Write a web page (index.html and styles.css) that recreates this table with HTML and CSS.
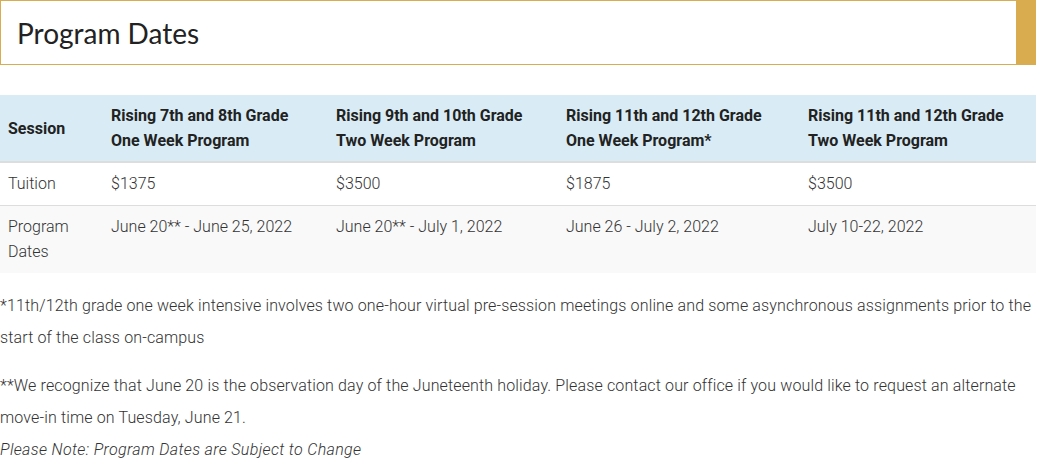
FILE: index.html
```html
<!DOCTYPE html>
<html lang="en">

<head>
    <meta charset="UTF-8">
    <meta name="viewport" content="width=device-width, initial-scale=1.0">
    <title>Program Dates</title>
    <link rel="stylesheet" href="styles.css">
</head>

<body>
    <div class="content">
        <!-- Section title -->
        <div class="section-title">
            <h2>Program Dates</h2>
        </div>

        <!-- Dates table -->
        <table class="dates-table">
            <thead>
                <tr>
                    <th class="col-session">Session</th>
                    <th class="col-a">Rising 7th and 8th Grade<br>One Week Program</th>
                    <th class="col-b">Rising 9th and 10th Grade<br>Two Week Program</th>
                    <th class="col-c">Rising 11th and 12th Grade<br>One Week Program*</th>
                    <th class="col-d">Rising 11th and 12th Grade<br>Two Week Program</th>
                </tr>
            </thead>
            <tbody>
                <tr>
                    <td>Tuition</td>
                    <td>$1375</td>
                    <td>$3500</td>
                    <td>$1875</td>
                    <td>$3500</td>
                </tr>
                <tr class="alt">
                    <td>Program Dates</td>
                    <td>June 20** - June 25, 2022</td>
                    <td>June 20** - July 1, 2022</td>
                    <td>June 26 - July 2, 2022</td>
                    <td>July 10-22, 2022</td>
                </tr>
            </tbody>
        </table>

        <p>*11th/12th grade one week intensive involves two one-hour virtual pre-session meetings online and some asynchronous assignments prior to the start of the class on-campus</p>
        <p>**We recognize that June 20 is the observation day of the Juneteenth holiday. Please contact our office if you would like to request an alternate move-in time on Tuesday, June 21.<br><em>Please Note: Program Dates are Subject to Change</em></p>
    </div>
</body>

</html>
```

FILE: styles.css
```css
* {
    box-sizing: border-box;
    margin: 0;
    padding: 0;
}

body {
    font-family: Roboto, "Liberation Sans", sans-serif;
    font-weight: 300;
    font-size: 16px;
    color: #333;
    background-color: #fff;
}

.content {
    width: 1036px;
}

.section-title {
    height: 65px;
    border: 1px solid #d9ad4f;
    border-right: 20px solid #d9ad4f;
    padding: 0 16px;
    display: flex;
    align-items: center;
}

.section-title h2 {
    font-family: Lato, "Open Sans", sans-serif;
    font-weight: 400;
    font-size: 28px;
    color: #222;
}

.dates-table {
    width: 1036px;
    margin-top: 30px;
    border-collapse: collapse;
    table-layout: fixed;
}

.dates-table th,
.dates-table td {
    text-align: left;
    vertical-align: top;
    padding: 8px;
    line-height: 25px;
}

.dates-table tbody td {
    padding-bottom: 9px;
}

.dates-table thead th {
    background-color: #d9ecf5;
    font-weight: 700;
    color: #222;
    vertical-align: middle;
    border-bottom: 2px solid #ddd;
}

.dates-table tbody tr {
    border-top: 1px solid #ddd;
}

.dates-table tbody tr:first-child {
    border-top: none;
}

.dates-table tbody tr.alt {
    background-color: #f9f9f9;
}

.col-session {
    width: 103px;
}

.col-a {
    width: 225px;
}

.col-b {
    width: 230px;
}

.col-c {
    width: 242px;
}

.col-d {
    width: 236px;
}

p {
    line-height: 32px;
    letter-spacing: 0.14px;
}

.dates-table + p {
    margin-top: 17px;
}

p + p {
    margin-top: 16px;
}

p em {
    font-style: italic;
    letter-spacing: 0.35px;
}
```
